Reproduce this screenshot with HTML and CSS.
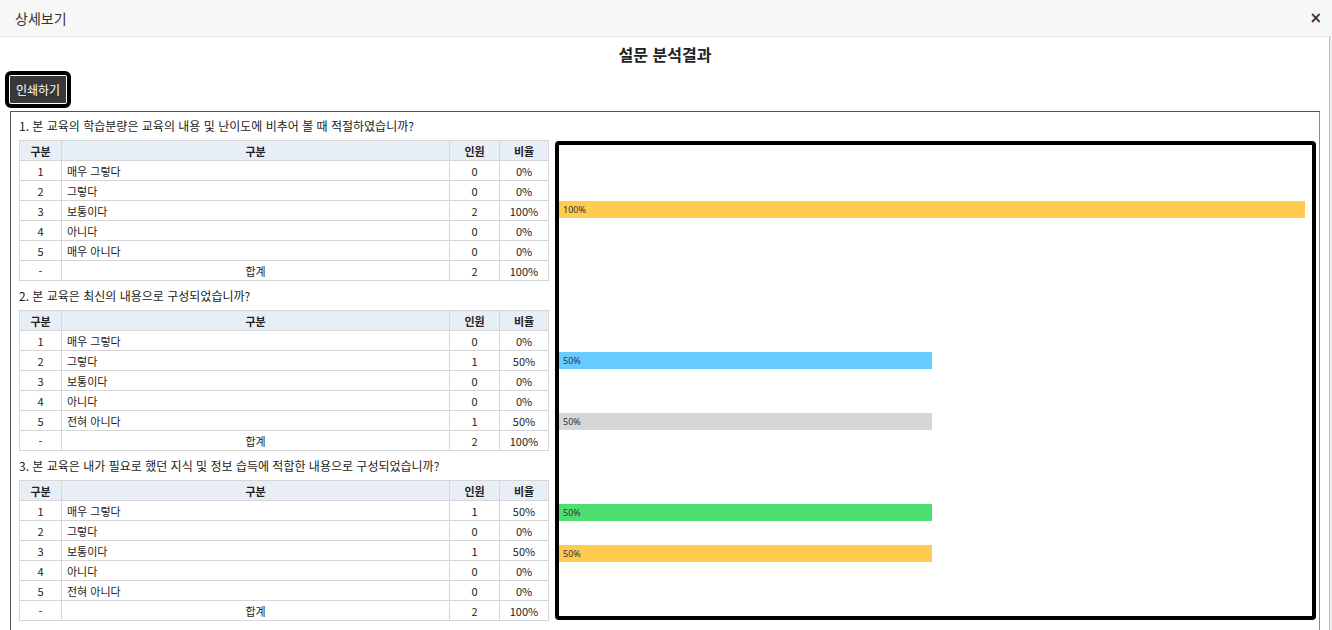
FILE: index.html
```html
<!DOCTYPE html>
<html lang="ko">
<head>
    <meta charset="UTF-8">
    <title>상세보기</title>
    <link rel="stylesheet" href="styles.css">
</head>
<body>
<div class="modal">
    <div class="modal-header">
        <span class="modal-title">상세보기</span>
        <span class="modal-close">&times;</span>
    </div>
    <div class="modal-body">
        <div class="body-main">
            <h2 class="report-title">설문 분석결과</h2>
            <div class="toolbar">
                <button type="button" class="btn-print">인쇄하기</button>
            </div>
            <div class="report">
                <div class="report__tables">
                    <div class="question question--first">1. 본 교육의 학습분량은 교육의 내용 및 난이도에 비추어 볼 때 적절하였습니까?</div>
                    <table class="result-table">
                        <colgroup><col class="c-no"><col><col class="c-cnt"><col class="c-rate"></colgroup>
                        <tr><th>구분</th><th>구분</th><th>인원</th><th>비율</th></tr>
                        <tr><td>1</td><td class="label">매우 그렇다</td><td>0</td><td>0%</td></tr>
                        <tr><td>2</td><td class="label">그렇다</td><td>0</td><td>0%</td></tr>
                        <tr><td>3</td><td class="label">보통이다</td><td>2</td><td>100%</td></tr>
                        <tr><td>4</td><td class="label">아니다</td><td>0</td><td>0%</td></tr>
                        <tr><td>5</td><td class="label">매우 아니다</td><td>0</td><td>0%</td></tr>
                        <tr><td>-</td><td>합계</td><td>2</td><td>100%</td></tr>
                    </table>

                    <div class="question">2. 본 교육은 최신의 내용으로 구성되었습니까?</div>
                    <table class="result-table">
                        <colgroup><col class="c-no"><col><col class="c-cnt"><col class="c-rate"></colgroup>
                        <tr><th>구분</th><th>구분</th><th>인원</th><th>비율</th></tr>
                        <tr><td>1</td><td class="label">매우 그렇다</td><td>0</td><td>0%</td></tr>
                        <tr><td>2</td><td class="label">그렇다</td><td>1</td><td>50%</td></tr>
                        <tr><td>3</td><td class="label">보통이다</td><td>0</td><td>0%</td></tr>
                        <tr><td>4</td><td class="label">아니다</td><td>0</td><td>0%</td></tr>
                        <tr><td>5</td><td class="label">전혀 아니다</td><td>1</td><td>50%</td></tr>
                        <tr><td>-</td><td>합계</td><td>2</td><td>100%</td></tr>
                    </table>

                    <div class="question">3. 본 교육은 내가 필요로 했던 지식 및 정보 습득에 적합한 내용으로 구성되었습니까?</div>
                    <table class="result-table">
                        <colgroup><col class="c-no"><col><col class="c-cnt"><col class="c-rate"></colgroup>
                        <tr><th>구분</th><th>구분</th><th>인원</th><th>비율</th></tr>
                        <tr><td>1</td><td class="label">매우 그렇다</td><td>1</td><td>50%</td></tr>
                        <tr><td>2</td><td class="label">그렇다</td><td>0</td><td>0%</td></tr>
                        <tr><td>3</td><td class="label">보통이다</td><td>1</td><td>50%</td></tr>
                        <tr><td>4</td><td class="label">아니다</td><td>0</td><td>0%</td></tr>
                        <tr><td>5</td><td class="label">전혀 아니다</td><td>0</td><td>0%</td></tr>
                        <tr><td>-</td><td>합계</td><td>2</td><td>100%</td></tr>
                    </table>
                </div>

                <div class="chart">
                    <div class="chart__gap chart__gap--top"></div>
                    <div class="chart__row"></div>
                    <div class="chart__row"></div>
                    <div class="chart__row"><div class="bar bar--yellow" style="width: 100%">100%</div></div>
                    <div class="chart__row"></div>
                    <div class="chart__row"></div>
                    <div class="chart__row"></div>

                    <div class="chart__gap"></div>
                    <div class="chart__row"></div>
                    <div class="chart__row"><div class="bar bar--blue" style="width: 50%">50%</div></div>
                    <div class="chart__row"></div>
                    <div class="chart__row"></div>
                    <div class="chart__row"><div class="bar bar--grey" style="width: 50%">50%</div></div>
                    <div class="chart__row"></div>

                    <div class="chart__gap"></div>
                    <div class="chart__row"><div class="bar bar--green" style="width: 50%">50%</div></div>
                    <div class="chart__row"></div>
                    <div class="chart__row"><div class="bar bar--yellow" style="width: 50%">50%</div></div>
                    <div class="chart__row"></div>
                    <div class="chart__row"></div>
                    <div class="chart__row"></div>
                </div>
            </div>
        </div>
        <div class="scroll-track"></div>
    </div>
</div>
</body>
</html>
```

FILE: styles.css
```css
html, body {
    margin: 0;
    padding: 0;
    background-color: #fff;
    font-family: "Noto Sans CJK KR", "Noto Sans", sans-serif;
    color: #222;
    overflow: hidden;
}

.modal {
    width: 1332px;
    height: 630px;
    overflow: hidden;
}

.modal-header {
    display: flex;
    justify-content: space-between;
    align-items: center;
    height: 36px;
    padding: 0 10px 0 15px;
    background-color: #f7f7f7;
    border-bottom: 1px solid #e5e5e5;
}

.modal-title {
    font-size: 14px;
    color: #333;
}

.modal-close {
    font-family: "DejaVu Sans", sans-serif;
    font-size: 15px;
    font-weight: bold;
    color: #333;
    line-height: 1;
}

.modal-body {
    display: flex;
}

.body-main {
    width: 1310px;
    padding: 0 9px 0 10px;
}

.scroll-track {
    width: 2px;
    border-left: 1px solid #b8b8b8;
    background-color: #f0f0f0;
}

.report-title {
    margin: 0;
    height: 34px;
    line-height: 34px;
    text-align: center;
    font-size: 16px;
    font-weight: bold;
    color: #222;
}

.toolbar {
    height: 36px;
    padding-top: 4px;
}

.btn-print {
    margin-left: -1px;
    height: 29px;
    padding: 0 6px;
    background-color: #383838;
    color: #fff;
    font-family: inherit;
    font-size: 12px;
    border: 1px solid #fff;
    border-radius: 2px;
    outline: 4px solid #000;
}

.report {
    display: flex;
    align-items: flex-start;
    height: 600px;
    border: 1px solid #555;
    border-right-color: #8a8a8a;
    padding-left: 8px;
}

.report__tables {
    width: 530px;
}

.question {
    height: 29px;
    line-height: 30px;
    font-size: 12px;
    color: #222;
    white-space: nowrap;
}

.question--first {
    height: 28px;
    line-height: 28px;
}

.result-table {
    width: 530px;
    table-layout: fixed;
    border-collapse: collapse;
    font-size: 11px;
}

.result-table th,
.result-table td {
    height: 19px;
    padding: 0;
    border: 1px solid #d6d6d6;
    text-align: center;
    color: #222;
}

.result-table th {
    background-color: #e8eef6;
    font-weight: bold;
}

.result-table td.label {
    text-align: left;
    padding-left: 5px;
}

.c-no {
    width: 42px;
}

.c-cnt {
    width: 50px;
}

.c-rate {
    width: 49px;
}

.chart {
    box-sizing: border-box;
    width: 761px;
    height: 479px;
    margin: 29px 0 0 6px;
    padding-right: 7px;
    border: 4px solid #000;
    border-radius: 4px;
    overflow: hidden;
}

.chart__gap {
    height: 50px;
}

.chart__gap--top {
    height: 15px;
}

.chart__row {
    height: 20px;
}

.bar {
    box-sizing: border-box;
    height: 17px;
    margin-top: 1px;
    padding-left: 4px;
    line-height: 17px;
    font-family: "Noto Sans", sans-serif;
    font-size: 9px;
    color: #333;
    white-space: nowrap;
}

.bar--yellow {
    background-color: #ffcb50;
}

.bar--blue {
    background-color: #66ccff;
}

.bar--grey {
    background-color: #d6d6d6;
}

.bar--green {
    background-color: #4fdf70;
}
```
